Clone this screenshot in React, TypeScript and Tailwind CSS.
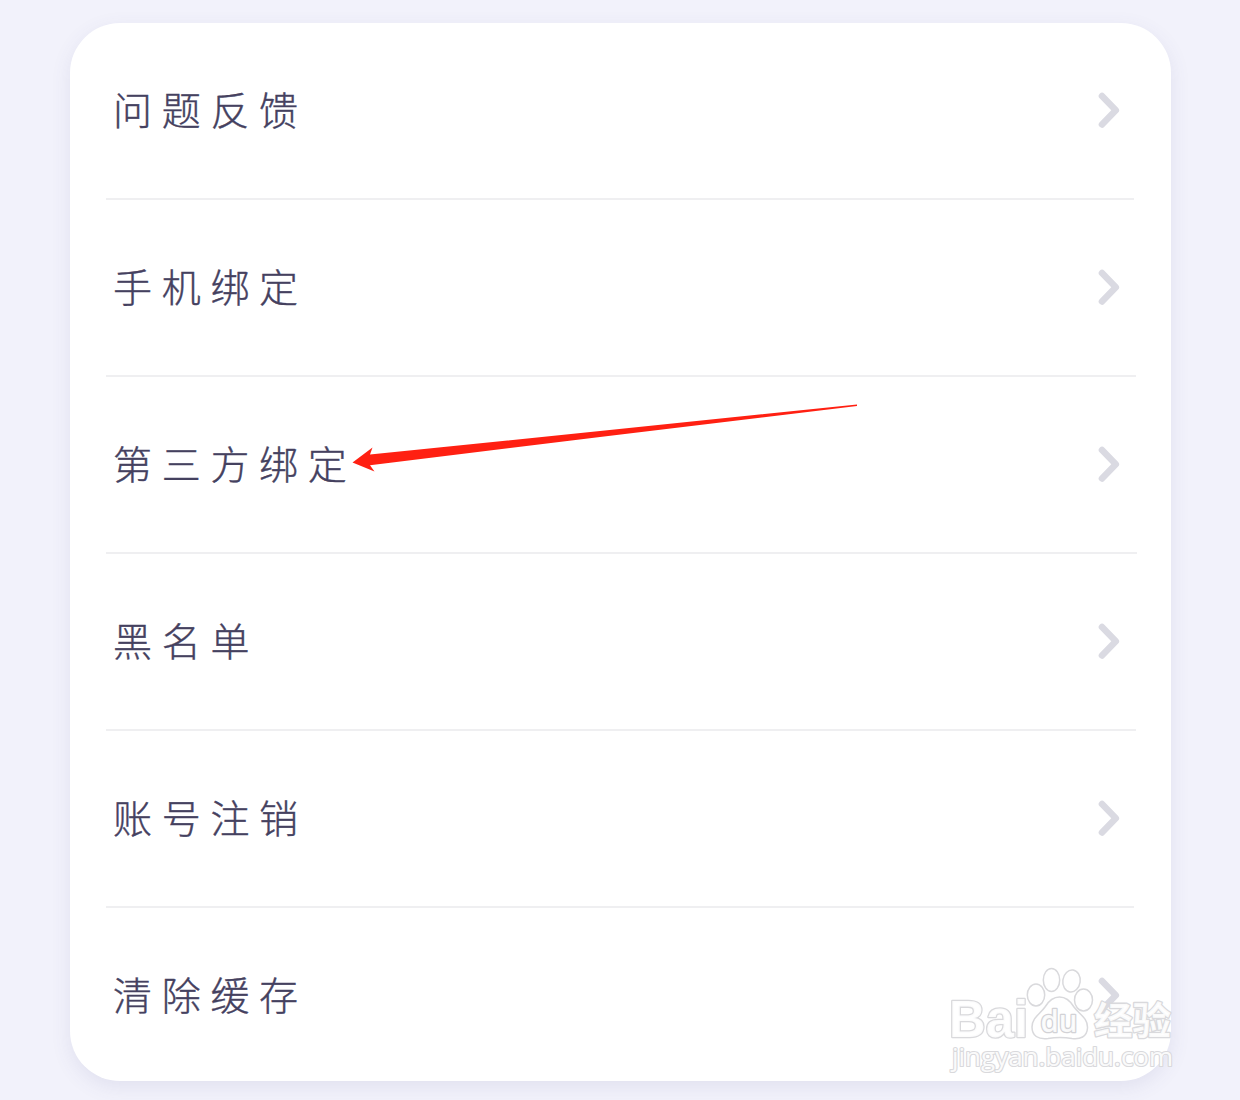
interface SettingItem {
  label: string;
  divider: string;
}

const ITEMS: SettingItem[] = [
  { label: "问题反馈", divider: "w-[1028px] bg-[#efeff1]" },
  { label: "手机绑定", divider: "w-[1030px] bg-[#efeff1]" },
  { label: "第三方绑定", divider: "w-[1031px] bg-[#efeff1]" },
  { label: "黑名单", divider: "w-[1030px] bg-[#efeff1]" },
  { label: "账号注销", divider: "w-[1028px] bg-[#efeff1]" },
  { label: "清除缓存", divider: "w-[1028px]" },
];

function Chevron() {
  return (
    <svg className="mb-0.5 h-[38px] w-6 shrink-0" viewBox="0 0 24 38" fill="none">
      <path
        d="M5 5 L18.8 19.2 L5 33.5"
        stroke="#dadae2"
        strokeWidth="6.6"
        strokeLinecap="round"
        strokeLinejoin="round"
      />
    </svg>
  );
}

function SettingRow({ label, divider }: SettingItem) {
  return (
    <li className="flex h-[177px] flex-col">
      <div className="flex flex-1 items-center justify-between pr-[50px] pl-[43px]">
        <span className="pb-[5px] text-[39px] leading-none font-light tracking-[9.7px] text-[#45415f] [-webkit-text-stroke:0.4px_#45415f]">
          {label}
        </span>
        <Chevron />
      </div>
      <div className={`ml-9 h-0.5 ${divider}`} />
    </li>
  );
}

/* 红色指示箭头 */
function Arrow() {
  return (
    <svg
      className="pointer-events-none absolute top-[400px] left-[350px] h-[76px] w-[510px]"
      viewBox="350 400 510 76"
    >
      <path
        d="M352.5 462.5 L372.5 447.5 L370 454.5 L600 431 L857 404.5 L857 406 L600 437 L370 465.3 L374.5 471.5 Z"
        fill="#ff2012"
      />
    </svg>
  );
}

/* 右下角水印 */
function Watermark() {
  return (
    <svg
      className="pointer-events-none absolute top-[960px] left-[940px] h-[120px] w-[240px]"
      viewBox="940 960 240 120"
      fill="#ffffff"
      fillOpacity="0.9"
      stroke="#d9d9dc"
      strokeWidth="1.5"
      strokeLinejoin="round"
    >
      <text
        x="949" y="1037" fontSize="51" fontWeight="700"
        textLength="79" lengthAdjust="spacingAndGlyphs"
        fontFamily="Liberation Sans, sans-serif" strokeWidth="2.6" paintOrder="stroke"
      >
        Bai
      </text>
      <ellipse cx="1036" cy="995" rx="8.7" ry="11" />
      <ellipse cx="1051.5" cy="980" rx="8.2" ry="11.5" />
      <ellipse cx="1071.5" cy="981" rx="8.7" ry="11" transform="rotate(8 1071.5 981)" />
      <ellipse cx="1083.5" cy="1000" rx="9" ry="11" />
      <path d="M1059.5 997 C1067 997 1071 1002 1074 1007 C1079 1014 1088 1018 1087.5 1028 C1087 1037 1080 1039.5 1072 1038.5 C1063 1037 1057 1037 1048 1038.500 C1038 1039.5 1032 1036 1032 1027 C1032 1018 1040 1014 1045 1007 C1048 1002 1052 997 1059.5 997 Z" />
      <text
        x="1040.500" y="1031.5" fontSize="31" fontWeight="600"
        textLength="37" lengthAdjust="spacingAndGlyphs"
        fontFamily="Open Sans, sans-serif" strokeWidth="2.6" stroke="#d2d2d6" paintOrder="stroke"
      >
        du
      </text>
      <text
        x="1094" y="1033.500" fontSize="38" fontWeight="700"
        textLength="77" lengthAdjust="spacingAndGlyphs"
        fontFamily="Noto Sans CJK SC, sans-serif" strokeWidth="2.6" paintOrder="stroke"
      >
        经验
      </text>
      <text
        x="952" y="1066" fontSize="25" fontWeight="400"
        textLength="221" lengthAdjust="spacingAndGlyphs"
        fontFamily="Open Sans, sans-serif" strokeWidth="2.2" paintOrder="stroke"
      >
        jingyan.baidu.com
      </text>
    </svg>
  );
}

export default function App() {
  return (
    <div className="relative h-[1100px] w-[1240px] overflow-hidden bg-[#f2f2fb] pt-[23px] font-['Noto_Sans_CJK_SC',sans-serif]">
      <ul className="ml-[70px] h-[1058px] w-[1101px] rounded-[50px] bg-white shadow-[0_6px_20px_rgba(80,80,140,0.10)]">
        {ITEMS.map((item) => (
          <SettingRow key={item.label} {...item} />
        ))}
      </ul>
      <Arrow />
      <Watermark />
    </div>
  );
}
